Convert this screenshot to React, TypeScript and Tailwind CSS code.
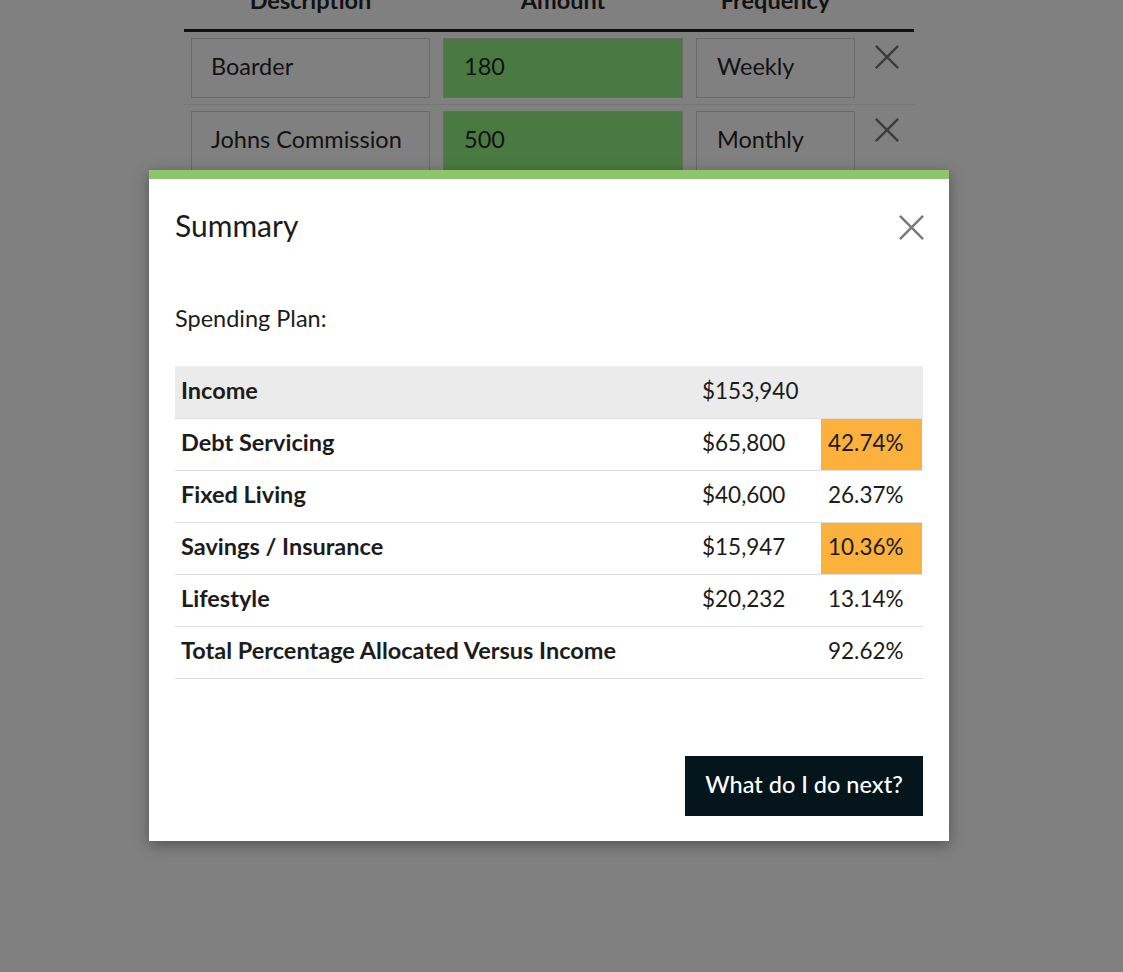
import React from "react";

const rows = [
  { label: "Income", amount: "$153,940", pct: "", warn: false, shaded: true },
  { label: "Debt Servicing", amount: "$65,800", pct: "42.74%", warn: true, shaded: false },
  { label: "Fixed Living", amount: "$40,600", pct: "26.37%", warn: false, shaded: false },
  { label: "Savings / Insurance", amount: "$15,947", pct: "10.36%", warn: true, shaded: false },
  { label: "Lifestyle", amount: "$20,232", pct: "13.14%", warn: false, shaded: false },
  { label: "Total Percentage Allocated Versus Income", amount: "", pct: "92.62%", warn: false, shaded: false },
];

const incomeRows = [
  { desc: "Boarder", amount: "180", freq: "Weekly" },
  { desc: "Johns Commission", amount: "500", freq: "Monthly" },
];

function CrossIcon({ className }: { className?: string }) {
  return (
    <svg viewBox="0 0 28 28" className={className} fill="none" stroke="currentColor" strokeWidth="2.6">
      <path d="M2 2 L26 26 M26 2 L2 26" />
    </svg>
  );
}

export default function App() {
  return (
    <div className="relative min-h-[972px] w-full overflow-hidden bg-[#808080] font-['Lato','Open_Sans',sans-serif] text-[#121212]">
      {/* Page behind the dialog */}
      <div className="ml-[184px] w-[730px] -mt-[16px]">
        <div className="grid grid-cols-[253px_252px_173px_52px] border-b-[3px] border-[#111] pb-[12px] text-[23.5px] font-bold leading-[33px]">
          <div className="text-center">Description</div>
          <div className="text-center">Amount</div>
          <div className="text-center">Frequency</div>
          <div />
        </div>
        {incomeRows.map((r) => (
          <div
            key={r.desc}
            className="grid grid-cols-[253px_252px_173px_52px] border-b border-[#767676] py-[6px] text-[23.5px]"
          >
            <div className="px-[7px]">
              <div className="flex h-[60px] items-center border border-[#6a6a6a] px-[19px] pb-[3px]">{r.desc}</div>
            </div>
            <div className="px-[6px]">
              <div className="flex h-[60px] items-center border border-[#6a6a6a] bg-[#4a7a42] px-[20px] pb-[3px]">
                {r.amount}
              </div>
            </div>
            <div className="px-[7px]">
              <div className="flex h-[60px] items-center border border-[#6a6a6a] px-[20px] pb-[3px]">{r.freq}</div>
            </div>
            <div className="flex items-start justify-center pt-[6px] text-[#3c3c3c]">
              <CrossIcon className="ml-[-2px] h-[26px] w-[26px]" />
            </div>
          </div>
        ))}
      </div>

      {/* Summary dialog */}
      <div className="absolute left-[149px] top-[170px] w-[800px] bg-white shadow-[0_4px_14px_rgba(0,0,0,0.35)]">
        <div className="h-[9px] bg-[#8cc56b]" />
        <div className="px-[26px] pb-[25px]">
          <div className="flex items-start justify-between pt-[28px]">
            <h2 className="text-[30px] leading-[36px] text-[#1c1c1c]">Summary</h2>
            <button className="mt-[7px] mr-[-2px] text-[#7a7a7a]">
              <CrossIcon className="h-[27px] w-[27px]" />
            </button>
          </div>

          <p className="mt-[60px] text-[23.5px] leading-[30px] text-[#1c1c1c]">Spending Plan:</p>

          <div className="mt-[33px] border-b border-[#dedede]">
            {rows.map((r, i) => (
              <div
                key={r.label}
                className={`grid h-[52px] grid-cols-[520px_126px_101px] items-stretch text-[22.5px] ${
                  i > 0 ? "border-t border-[#dedede]" : ""
                } ${r.shaded ? "bg-[#ebebeb]" : ""}`}
              >
                <div className="flex items-center px-[6px] pb-[3px] text-[23.5px] font-bold text-[#1c1c1c]">
                  {r.label}
                </div>
                <div className="flex items-center px-[7px] pb-[3px] text-[#1c1c1c]">{r.amount}</div>
                <div
                  className={`flex items-center px-[7px] pb-[3px] text-[#1c1c1c] ${r.warn ? "bg-[#fbb13c]" : ""}`}
                >
                  {r.pct}
                </div>
              </div>
            ))}
          </div>

          <div className="mt-[77px] flex justify-end">
            <button className="h-[60px] w-[238px] bg-[#04151c] pb-[2px] text-[23.5px] font-medium text-white">
              What do I do next?
            </button>
          </div>
        </div>
      </div>
    </div>
  );
}
